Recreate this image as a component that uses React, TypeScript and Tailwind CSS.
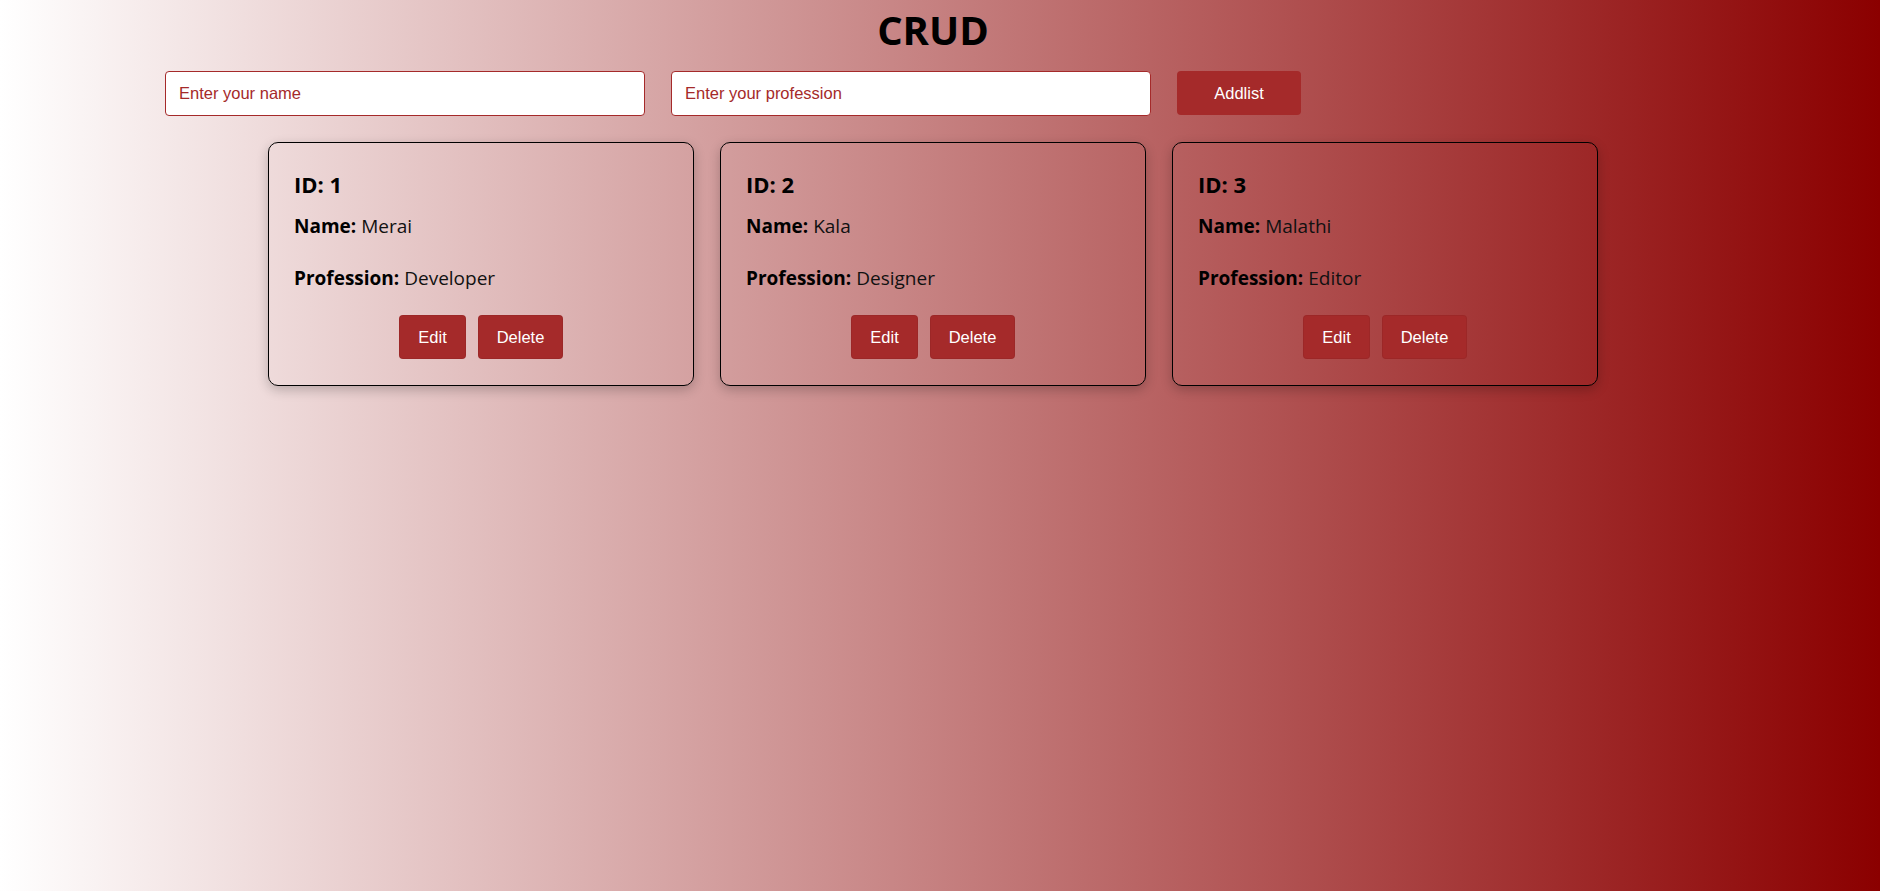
import { useState } from "react";

type Person = { id: number; name: string; profession: string };

const initial: Person[] = [
  { id: 1, name: "Merai", profession: "Developer" },
  { id: 2, name: "Kala", profession: "Designer" },
  { id: 3, name: "Malathi", profession: "Editor" },
];

function Card({ person }: { person: Person }) {
  return (
    <div className="flex h-[244px] w-[426px] flex-col rounded-[10px] border border-black px-[25px] pt-[25px] shadow-[0_4px_12px_rgba(0,0,0,0.22)]">
      <h2 className="text-[22px] font-bold leading-[33px] text-black">ID: {person.id}</h2>
      <p className="mt-[10px] text-[19px] leading-[30px] text-[#111]">
        <span className="font-bold text-black">Name:</span> {person.name}
      </p>
      <p className="mt-[22px] text-[19px] leading-[30px] text-[#111]">
        <span className="font-bold text-black">Profession:</span> {person.profession}
      </p>
      <div className="mt-[22px] flex justify-center gap-[12px] font-['Liberation_Sans',Arial,sans-serif] text-[16.5px] text-white">
        <button className="h-[44px] w-[67px] rounded-[4px] border border-black/5 bg-[#a52a2a]">Edit</button>
        <button className="h-[44px] w-[85px] rounded-[4px] border border-black/5 bg-[#a52a2a]">Delete</button>
      </div>
    </div>
  );
}

export default function App() {
  const [people] = useState<Person[]>(initial);
  const [name, setName] = useState("");
  const [profession, setProfession] = useState("");

  return (
    <div className="min-h-screen w-full bg-linear-to-r/srgb from-white to-[#8b0000] font-['Open_Sans','Noto_Sans',sans-serif]">
      <h1 className="pr-[14px] pt-[6px] text-center text-[40px] font-bold leading-[48px] text-black">CRUD</h1>

      <div className="ml-[165px] mt-[17px] flex items-start gap-[26px] font-['Liberation_Sans',Arial,sans-serif] text-[16.5px]">
        <input
          value={name}
          onChange={(e) => setName(e.target.value)}
          placeholder="Enter your name"
          className="h-[45px] w-[480px] rounded-[4px] border border-[#a52a2a] bg-white px-[13px] text-[#a52a2a] outline-none placeholder:text-[#a52a2a]"
        />
        <input
          value={profession}
          onChange={(e) => setProfession(e.target.value)}
          placeholder="Enter your profession"
          className="h-[45px] w-[480px] rounded-[4px] border border-[#a52a2a] bg-white px-[13px] text-[#a52a2a] outline-none placeholder:text-[#a52a2a]"
        />
        <button className="h-[44px] w-[124px] rounded-[4px] bg-[#a52a2a] text-white">Addlist</button>
      </div>

      <div className="mt-[26px] flex justify-center gap-[26px] pr-[14px]">
        {people.map((p) => (
          <Card key={p.id} person={p} />
        ))}
      </div>
    </div>
  );
}
